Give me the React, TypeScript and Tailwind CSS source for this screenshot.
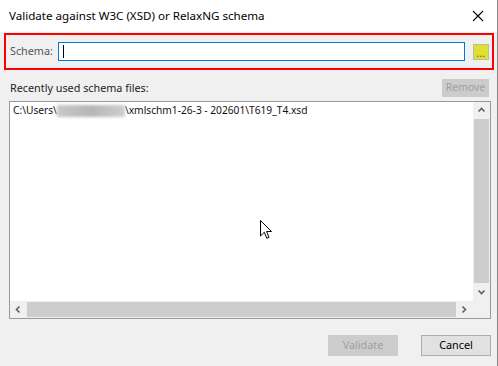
import React from 'react';

const font = { fontFamily: '"Segoe UI", "Noto Sans", "Open Sans", sans-serif' };

const Chevron = ({ dir }: { dir: 'up' | 'down' | 'left' | 'right' }) => {
  const d = {
    up: 'M1.5 5.5 L4.5 2.5 L7.5 5.5',
    down: 'M1.5 2.5 L4.5 5.5 L7.5 2.5',
    left: 'M5.5 1.5 L2.5 4.5 L5.5 7.5',
    right: 'M2.5 1.5 L5.5 4.5 L2.5 7.5',
  }[dir];
  return (
    <svg width="9" height="9" viewBox="0 0 9 9">
      <path d={d} fill="none" stroke="#606060" strokeWidth="1.6" />
    </svg>
  );
};

export default function App() {
  return (
    <div
      className="w-[498px] h-[366px] flex flex-col bg-[#f0f0f0] border-r border-[#8c8c8c] relative overflow-hidden text-[10.8px] text-black"
      style={font}
    >
      {/* Title bar */}
      <div className="h-[32px] bg-white flex items-center justify-between pl-[9px] pr-[11px] shrink-0">
        <span className="text-[11.6px]">Validate against W3C (XSD) or RelaxNG schema</span>
        <svg width="12" height="12" viewBox="0 0 12 12" className="mr-[2px]">
          <path d="M1 1 L11 11 M11 1 L1 11" stroke="#000" strokeWidth="1.1" />
        </svg>
      </div>

      {/* Schema row, outlined in red */}
      <div className="mt-[1px] mx-[4px] mr-[3px] h-[37px] border-[2px] border-[#ff0000] flex items-center pl-[4px] pr-[3px]">
        <span className="text-[#555] w-[48px]">Schema:</span>
        <div className="flex-1 h-[19px] bg-white border border-[#0078d7] flex items-center pl-[4px]">
          <div className="w-[1px] h-[13px] bg-black" />
        </div>
        <div className="ml-[8px] w-[16px] h-[16px] bg-[#e0e030] border border-[#bcbc9c] flex items-end justify-center">
          <span className="text-[9px] leading-[11px] font-bold text-[#6f6f20] tracking-[0.5px]">...</span>
        </div>
      </div>

      {/* Recently used */}
      <div className="mt-[9px] pl-[10px] pr-[8px] flex items-center justify-between">
        <span className="text-[#222]">Recently used schema files:</span>
        <div className="w-[47px] h-[18px] bg-[#cccccc] flex items-center justify-center text-[#a0a0a0] text-[10.4px]">
          Remove
        </div>
      </div>

      {/* List box */}
      <div className="mt-[4px] ml-[9px] mr-[6px] h-[218px] border border-[#9a9a9a] bg-white flex flex-col">
        <div className="flex flex-1 min-h-0">
          <div className="flex-1 pl-[3px] pt-[1px]">
            <div className="flex items-center h-[15px] text-[#111] text-[10.2px] whitespace-nowrap">
              <span>C:\Users\</span>
              <span className="inline-block w-[68px] h-[12px] bg-gradient-to-r from-[#c9c9c9] via-[#b5b5b5] to-[#cfcfcf] blur-[1.5px]" />
              <span>\xmlschm1-26-3 - 202601\T619_T4.xsd</span>
            </div>
          </div>
          <div className="w-[17px] bg-[#f0f0f0] flex flex-col items-center">
            <div className="h-[17px] flex items-center justify-center">
              <Chevron dir="up" />
            </div>
            <div className="w-[15px] flex-1 bg-[#cdcdcd] mb-[1px]" />
            <div className="h-[17px] flex items-center justify-center">
              <Chevron dir="down" />
            </div>
          </div>
        </div>
        <div className="h-[17px] flex shrink-0">
          <div className="w-[17px] bg-[#f0f0f0] flex items-center justify-center">
            <Chevron dir="left" />
          </div>
          <div className="flex-1 bg-[#f0f0f0] flex items-center">
            <div className="w-full h-[15px] bg-[#cdcdcd]" />
          </div>
          <div className="w-[17px] bg-[#f0f0f0] flex items-center justify-center">
            <Chevron dir="right" />
          </div>
          <div className="w-[17px] bg-[#f0f0f0]" />
        </div>
      </div>

      {/* Buttons */}
      <div className="mt-[16px] flex justify-end gap-[23px] pr-[6px]">
        <div className="w-[70px] h-[21px] bg-[#cccccc] flex items-center justify-center text-[#a0a0a0]">
          Validate
        </div>
        <div className="w-[70px] h-[21px] bg-[#e1e1e1] border border-[#adadad] flex items-center justify-center text-black">
          Cancel
        </div>
      </div>

      {/* Mouse cursor */}
      <svg className="absolute left-[260px] top-[220px]" width="13" height="20" viewBox="0 0 13 20">
        <path
          d="M0.5 0.5 L0.5 16 L4.3 12.3 L6.8 18.3 L9 17.4 L6.6 11.5 L11.5 11.5 Z"
          fill="#fff"
          stroke="#000"
          strokeWidth="1"
          strokeLinejoin="miter"
        />
      </svg>
    </div>
  );
}
